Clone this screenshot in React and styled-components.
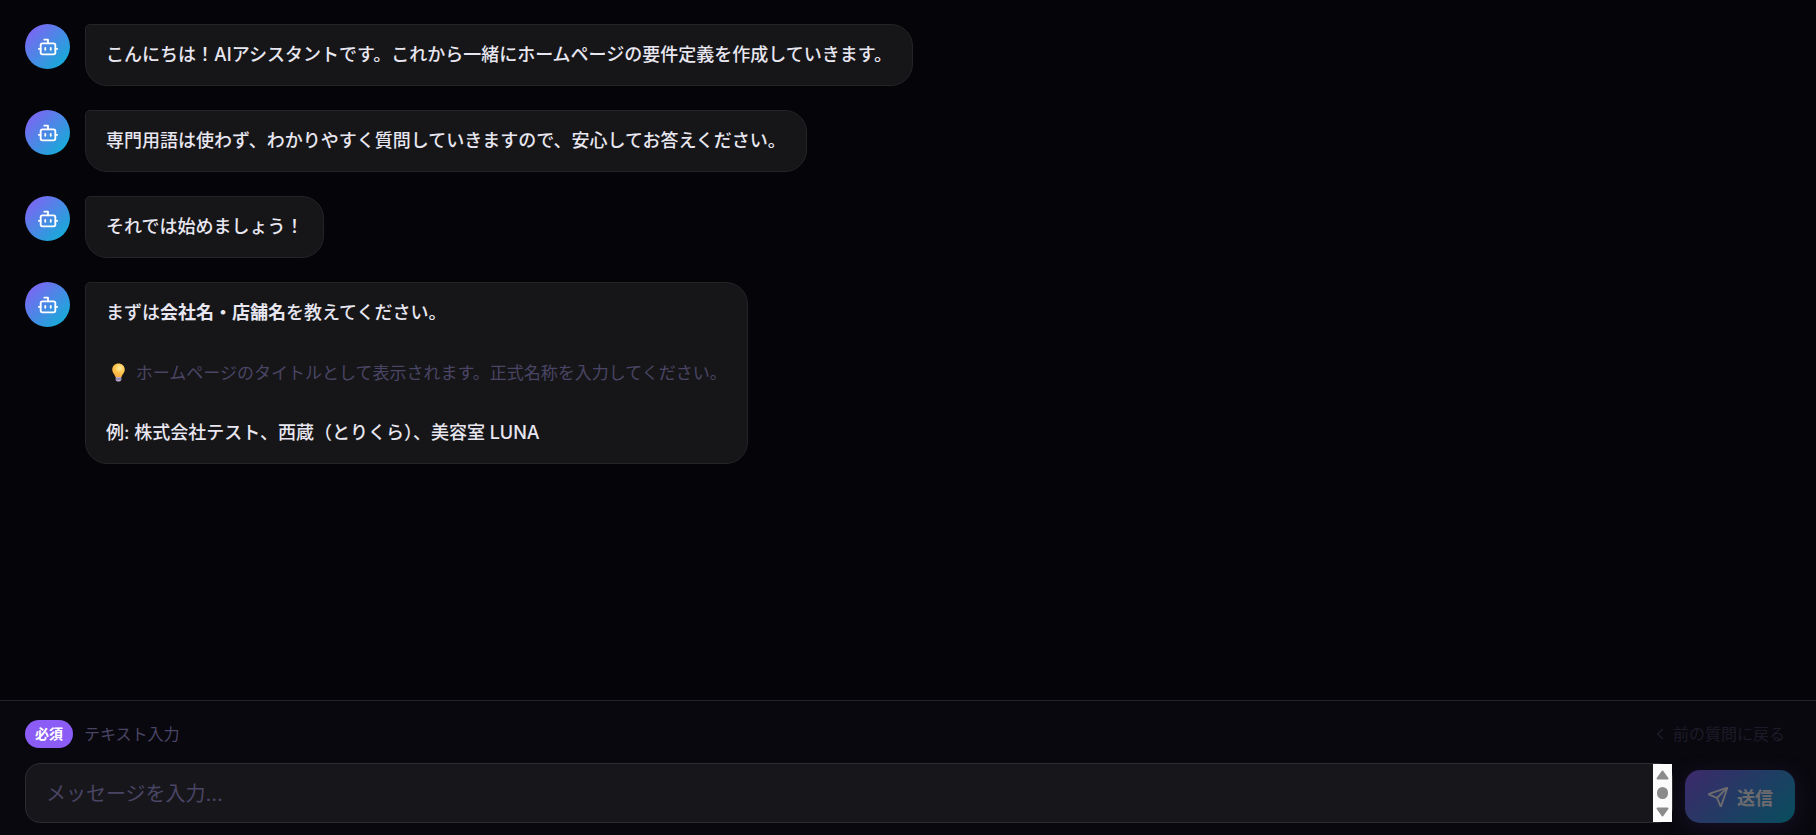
import React, {useState} from 'react';
import styled, {createGlobalStyle} from 'styled-components';
import {Bot, ChevronLeft, Send} from 'lucide-react';

const colors = {
    background: '#050408',
    footer: '#09080e',
    bubble: '#161618',
    field: '#17171b',
    border: '#242427',
    fieldBorder: '#2c2c30',
    text: '#e8e6f0',
    muted: '#4a4565',
    violet: '#8b5cf6',
    cyan: '#06b6d4'
};

const GlobalStyle = createGlobalStyle`
    *,
    *::before,
    *::after {
        box-sizing: border-box;
    }

    body {
        background-color: ${colors.background};
        color: ${colors.text};
        font-family: Inter, 'Noto Sans CJK JP', sans-serif;
        font-size: 18px;
        line-height: 30px;
        margin: 0;
    }

    button,
    textarea {
        font-family: inherit;
    }
`;

const Page = styled.div`
    display: flex;
    flex-direction: column;
    height: 100vh;
`;

const Messages = styled.main`
    display: flex;
    flex: 1;
    flex-direction: column;
    gap: 24px;
    min-height: 0;
    overflow-y: auto;
    padding: 24px 25px;
`;

const Row = styled.div`
    align-items: flex-start;
    display: flex;
    gap: 15px;
`;

const Avatar = styled.div`
    align-items: center;
    background: linear-gradient(135deg, ${colors.violet}, ${colors.cyan});
    border-radius: 50%;
    color: white;
    display: flex;
    flex-shrink: 0;
    height: 45px;
    justify-content: center;
    width: 45px;
`;

const Bubble = styled.div`
    background-color: ${colors.bubble};
    border: 1px solid ${colors.border};
    border-radius: 5px 22px 22px 22px;
    font-weight: 500;
    padding: 15px 20px;
`;

const Line = styled.p`
    margin: 0;

    & + & {
        margin-top: 30px;
    }
`;

const Hint = styled(Line)`
    color: ${colors.muted};
    font-size: 17px;
    font-weight: 400;
`;

const Bulb = styled.svg`
    height: 19px;
    vertical-align: -3px;
    width: 25px;
`;

const Footer = styled.form`
    background-color: ${colors.footer};
    border-top: 1px solid ${colors.border};
    display: flex;
    flex-direction: column;
    gap: 15px;
    padding: 19px 21px 12px 25px;
`;

const Toolbar = styled.div`
    align-items: center;
    display: flex;
    gap: 11px;
`;

const Badge = styled.span`
    background-color: ${colors.violet};
    border-radius: 14px;
    color: white;
    font-size: 14px;
    font-weight: 700;
    line-height: 28px;
    padding: 0 10px;
`;

const Label = styled.label`
    color: ${colors.muted};
    font-size: 16px;
    line-height: 28px;
`;

const BackButton = styled.button`
    align-items: center;
    background: none;
    border: 0;
    color: ${colors.muted};
    display: flex;
    font-size: 16px;
    gap: 4px;
    line-height: 28px;
    margin-left: auto;
    opacity: 0.3;
    padding: 0 10px;
`;

const Composer = styled.div`
    align-items: flex-end;
    display: flex;
    gap: 12px;
`;

const Field = styled.div`
    background-color: ${colors.field};
    border: 1px solid ${colors.fieldBorder};
    border-radius: 15px;
    display: flex;
    flex: 1;
    min-width: 0;
`;

const Input = styled.textarea`
    background: none;
    border: 0;
    color: ${colors.text};
    display: block;
    flex: 1;
    font-size: 20px;
    height: 58px;
    line-height: 30px;
    min-width: 0;
    outline: none;
    padding: 15px 20px 13px;
    resize: none;
    scrollbar-width: none;

    &::placeholder {
        color: ${colors.muted};
    }
`;

const ScrollTrack = styled.svg`
    background-color: #fcfcfc;
    flex-shrink: 0;
    height: 58px;
    width: 19px;
`;

const SendButton = styled.button`
    align-items: center;
    background: linear-gradient(135deg, ${colors.violet}, ${colors.cyan});
    border: 0;
    border-radius: 15px;
    box-shadow: 0 4px 20px rgba(139, 92, 246, 0.3);
    color: white;
    display: flex;
    font-size: 18px;
    font-weight: 700;
    gap: 8px;
    height: 53px;
    opacity: 0.4;
    padding: 0 22px;
`;

const messages = [
    'こんにちは！AIアシスタントです。これから一緒にホームページの要件定義を作成していきます。',
    '専門用語は使わず、わかりやすく質問していきますので、安心してお答えください。',
    'それでは始めましょう！'
];

const BulbIcon = () => (
    <Bulb viewBox="0 0 24 18" role="img" aria-label="💡">
        <defs>
            <radialGradient id="glass" cx="0.6" cy="0.35" r="0.7">
                <stop offset="0" stopColor="#ffe9a0" />
                <stop offset="0.5" stopColor="#ffcb52" />
                <stop offset="1" stopColor="#f8a83c" />
            </radialGradient>
        </defs>
        <path
            d="M12 0.3c3.4 0 6 2.5 6 5.8 0 3.4-2.5 4.500-3 7.200H9C8.500 10.600 6 9.500 6 6.100 6 2.800 8.600 0.300 12 0.300z"
            fill="url(#glass)"
        />
        <path d="M11 13V9l-1-1.500M13 13V9l1-1.500" fill="none" stroke="#f7a93e" strokeWidth="0.6" />
        <path d="M9.300 13.300h5.400v2.600c0 1-1.200 1.700-2.700 1.700s-2.700-0.700-2.700-1.700z" fill="#b9abd0" />
        <path d="M9.300 15.200h5.400" stroke="#6f6088" strokeWidth="0.9" />
    </Bulb>
);

const Scrollbar = () => (
    <ScrollTrack viewBox="0 0 19 58" aria-hidden="true">
        <g fill="#8b8b8b" stroke="#8b8b8b" strokeLinejoin="round" strokeWidth="2">
            <path d="M4.500 14.500h10L9.500 7.500z" />
            <path d="M4.500 44.500h10L9.500 51.500z" />
        </g>
        <rect x="4" y="23" width="11" height="12" rx="5.500" fill="#8b8b8b" />
    </ScrollTrack>
);

const Message = ({children}) => (
    <Row>
        <Avatar>
            <Bot size={22} />
        </Avatar>
        <Bubble>{children}</Bubble>
    </Row>
);

const App = () => {
    const [value, setValue] = useState('');

    return (
        <Page lang="ja">
            <GlobalStyle />
            <Messages>
                {messages.map(message => (
                    <Message key={message}>
                        <Line>{message}</Line>
                    </Message>
                ))}
                <Message>
                    <Line>
                        {'まずは'}
                        <strong>{'会社名・店舗名'}</strong>
                        {'を教えてください。'}
                    </Line>
                    <Hint>
                        <BulbIcon />
                        {' ホームページのタイトルとして表示されます。正式名称を入力してください。'}
                    </Hint>
                    <Line>{'例: 株式会社テスト、西蔵（とりくら）、美容室 LUNA'}</Line>
                </Message>
            </Messages>
            <Footer onSubmit={event => event.preventDefault()}>
                <Toolbar>
                    <Badge>{'必須'}</Badge>
                    <Label htmlFor="answer">{'テキスト入力'}</Label>
                    <BackButton type="button" disabled>
                        <ChevronLeft size={18} />
                        {'前の質問に戻る'}
                    </BackButton>
                </Toolbar>
                <Composer>
                    <Field>
                        <Input
                            id="answer"
                            rows={1}
                            placeholder="メッセージを入力..."
                            value={value}
                            onChange={event => setValue(event.target.value)}
                        />
                        <Scrollbar />
                    </Field>
                    <SendButton type="submit" disabled={!value}>
                        <Send size={22} />
                        {'送信'}
                    </SendButton>
                </Composer>
            </Footer>
        </Page>
    );
};

export default App;
